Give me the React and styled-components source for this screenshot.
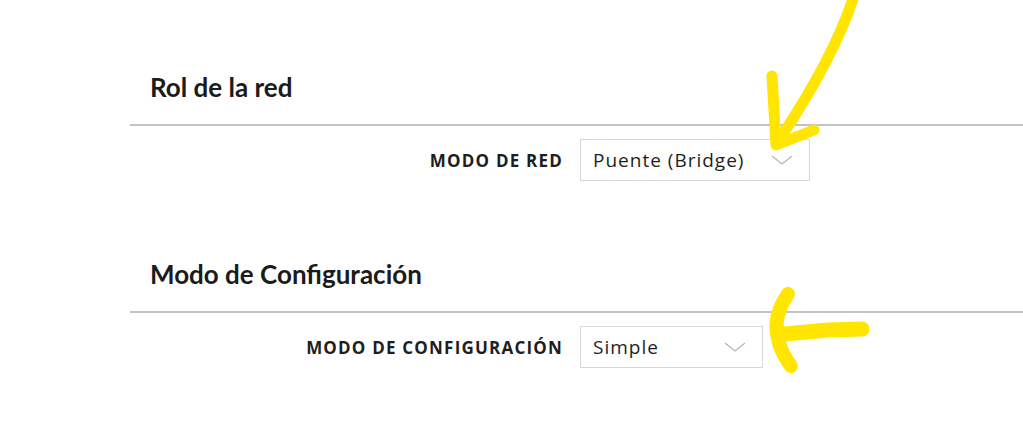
import styled, { createGlobalStyle } from "styled-components";

const GlobalStyle = createGlobalStyle`
  body {
    margin: 0;
    background: #fff;
  }
`;

function Chevron() {
  return (
    <svg width="22" height="10" viewBox="0 0 22 10">
      <polyline points="1,1 11,9 21,1" fill="none" stroke="#b5b5b5" strokeWidth="1.2" />
    </svg>
  );
}

function Field({ label, value, width }) {
  return (
    <Row>
      <Label>{label}</Label>
      <Select $width={width}>
        <span>{value}</span>
        <Chevron />
      </Select>
    </Row>
  );
}

function Arrows() {
  return (
    <Overlay width="1023" height="432" viewBox="0 0 1023 432">
      <g fill="none" stroke="#ffe500" strokeLinecap="round" strokeLinejoin="round">
        <path d="M854,-4 Q835,55 783,134" strokeWidth="11" />
        <path d="M772,76 L776,145 L814,130" strokeWidth="11" />
        <path d="M862,329 L828,330 L785,334" strokeWidth="15" />
        <path d="M788,294 Q774,314 777,334 Q780,352 791,366" strokeWidth="14" />
      </g>
    </Overlay>
  );
}

export default function App() {
  return (
    <Page>
      <GlobalStyle />
      <Section $top={72}>
        <Heading>Rol de la red</Heading>
        <Field label="MODO DE RED" value="Puente (Bridge)" width={230} />
      </Section>
      <Section $top={78}>
        <Heading>Modo de Configuración</Heading>
        <Field label="MODO DE CONFIGURACIÓN" value="Simple" width={183} />
      </Section>
      <Arrows />
    </Page>
  );
}

const Page = styled.div`
  position: relative;
  width: 1023px;
  height: 432px;
  overflow: hidden;
  background: #fff;
`;

const Section = styled.section`
  margin-left: 130px;
  padding-top: ${(p) => p.$top}px;
  display: flex;
  flex-direction: column;
`;

const Heading = styled.h2`
  margin: 0;
  padding: 0 0 22px 20px;
  font-family: Lato, "Liberation Sans", sans-serif;
  font-weight: 700;
  font-size: 26px;
  line-height: 30px;
  color: #1b1b1b;
  border-bottom: 2px solid #c3c3c3;
`;

const Row = styled.div`
  display: grid;
  grid-template-columns: 432px auto;
  column-gap: 18px;
  align-items: center;
  margin-top: 13px;
`;

const Label = styled.span`
  text-align: right;
  font-family: "Open Sans", "Noto Sans", sans-serif;
  font-weight: 700;
  font-size: 17px;
  letter-spacing: 1.2px;
  margin-right: -1px;
  color: #1e1e1e;
`;

const Select = styled.div`
  box-sizing: border-box;
  width: ${(p) => p.$width}px;
  height: 42px;
  padding: 0 16px 0 12px;
  display: flex;
  align-items: center;
  justify-content: space-between;
  border: 1px solid #d8d8d8;
  font-family: "Open Sans", "Noto Sans", sans-serif;
  font-size: 19px;
  letter-spacing: 1px;
  color: #1e1e1e;
`;

const Overlay = styled.svg`
  position: absolute;
  left: 0;
  top: 0;
  pointer-events: none;
`;
